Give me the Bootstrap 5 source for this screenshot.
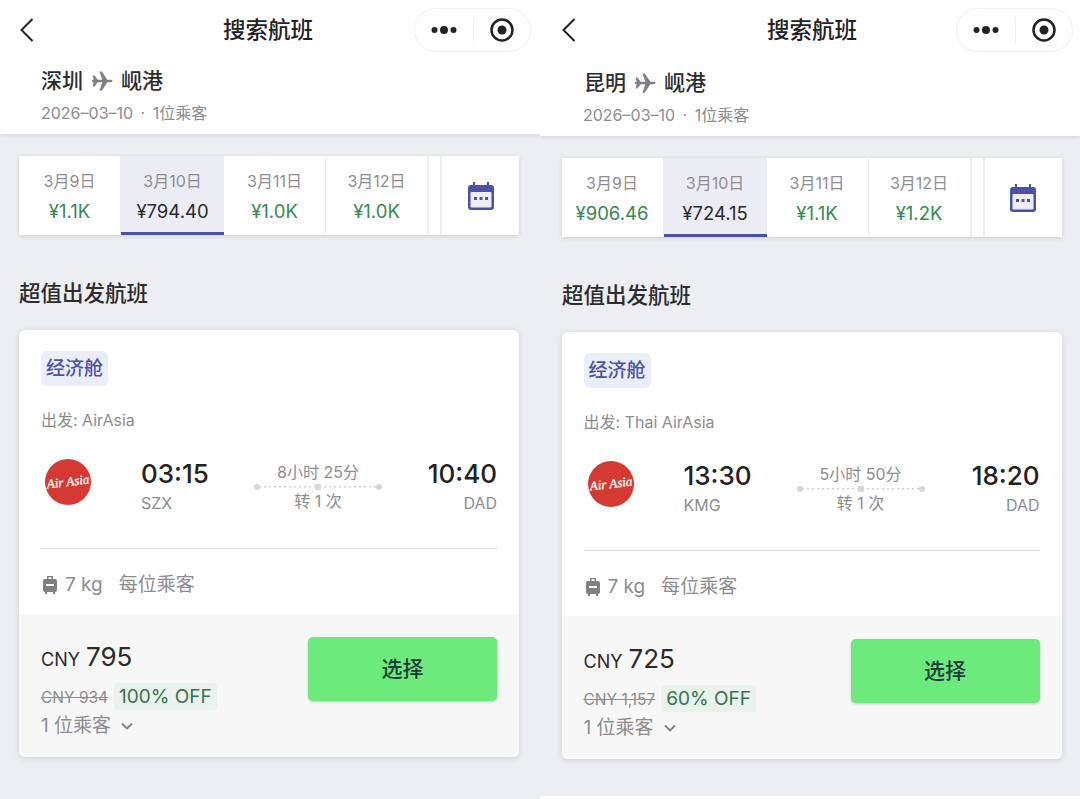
<!doctype html>
<html lang="zh"><head><meta charset="utf-8"><title>搜索航班</title>
<link href="https://cdn.jsdelivr.net/npm/bootstrap@5.3.0/dist/css/bootstrap.min.css" rel="stylesheet">
<style>
html,body{height:799px;overflow:hidden}
body{font-family:Inter,"Noto Sans CJK SC",sans-serif;color:#222;background:#eceef2}
.shot{width:1080px;height:799px}
.pane{width:540px;height:799px;background:#eceef2;overflow:hidden}
.head-top{background:#fff;box-shadow:0 1px 5px rgba(0,0,0,.12);height:134px}
.pane2 .head-top{height:136px}
.navline{height:60px;display:grid;grid-template-columns:1fr auto 1fr;align-items:center;padding:0 9px 0 19px}
.pane2 .navline{padding-left:21px;padding-right:7px}
.navtitle{font-size:22.500px;font-weight:500;margin-right:-2px;position:relative;left:-8px}
.pane2 .navtitle{left:-6px}
.capsule{width:117px;height:44px;border:1px solid #f0f0f2;border-radius:22px;justify-self:end}
.capsule i{display:block;width:1px;height:26px;background:#f1f1f3}
.route{font-size:21px;font-weight:500;line-height:30px;padding-left:41px;color:#2c2c2e;margin-top:6px}
.pane2 .route{margin-top:8px;padding-left:44px}
.subl{font-size:16px;line-height:22px;color:#8c8c90;padding-left:41px;margin-top:6px;word-spacing:3px}
.pane2 .subl{padding-left:43px}
.strip{margin:22px 21px 0 19px;height:79px;background:#eceef2;box-shadow:0 1px 4px rgba(0,0,0,.14)}
.pane2 .strip{margin-left:21.500px;margin-right:18.500px}
.dtab{background:#fff;text-align:center;margin-right:1px;width:101px;flex:none;padding-top:14px}
.dtab b{display:block;font-weight:400;font-size:16px;line-height:22px;color:#8e8e92}
.dtab span{display:block;font-size:18.500px;line-height:30px;color:#36894f;margin-top:4px}
.dtab.on{background:#ecedf4;border-bottom:3px solid #4c51a8;width:103px;margin-right:0}
.dtab.on span{color:#2a2a2c}
.dtab.lastd{margin-right:2px}
.sliver{background:#fff;width:11px;flex:none;margin-right:2px}
.calcell{background:#fff;flex:1}
.sect{font-size:21.500px;font-weight:500;line-height:30px;margin:43px 0 0 19px;color:#2c2c2e}
.pane2 .sect{margin-left:22px}
.fcard{margin:22px 21px 0 19px;height:427px;background:#fff;border-radius:6px;box-shadow:0 1px 6px rgba(0,0,0,.13);overflow:hidden}
.pane2 .fcard{margin-left:21.500px;margin-right:18.500px}
.cardtop{height:284px;padding:21px 22px 0}
.cabin{display:inline-block;height:35px;line-height:35px;width:67px;text-align:center;border-radius:6px;background:#eaeef9;color:#4c51a8;font-size:19px;font-weight:500}
.dep{font-size:16px;line-height:22px;color:#8c8c90;margin-top:23px}
.legs{height:70px;margin-top:20px}
.logo{width:46px;flex:none;margin-left:4px;margin-top:-8px}
.tm{font-size:26px;line-height:32px;font-weight:500;color:#222}
.ap{font-size:16px;line-height:22px;color:#8c8c90;margin-top:2px}
.ldep{margin-left:50px;width:114px}
.lmid{width:128px;text-align:center;color:#8c8c90;font-size:16px;line-height:22px;padding-top:1px;margin-left:-1px}
.dots{height:6px;margin:1px 0 0;position:relative;background:repeating-linear-gradient(90deg,#cfd0da 0 2px,transparent 2px 5px) 0 2px/100% 1.5px no-repeat}
.dots u{position:absolute;top:0;width:6px;height:6px;border-radius:50%;background:#d5d6de}
.dots u:nth-child(1){left:0}.dots u:nth-child(2){left:61px;border-radius:1px}.dots u:nth-child(3){right:0}
.lend{margin-left:auto;text-align:right}
.rule{height:1px;background:#dcdde0;margin-top:27px}
.bag{margin-top:23px;font-size:19px;line-height:26px;color:#8c8c90;padding-left:2px}
.bag span+span{margin-left:16px}
.foot{height:143px;background:#f7f7f7;padding:23px 22px 0}
.cny{font-size:18px;line-height:28px;color:#2a2a2c;margin-top:6px}
.cny em{font-style:normal;font-size:26px;margin-left:1px}
.oldp{font-size:15.500px;color:#8c8c90;text-decoration:line-through}
.off{display:inline-block;background:#e9f2ec;color:#36744c;border-radius:4px;font-size:19px;line-height:27px;padding:0 5px;margin-left:6px}
.oldrow{margin-top:9px;line-height:27px}
.pax{font-size:19px;line-height:26px;color:#8c8c90;margin-top:2px}
.chev{margin-left:10px}
.pickbtn{width:189px;height:64px;background:#6cea7c;border:0;border-radius:5px;color:#1f3a3a;font-size:21px;font-weight:500;box-shadow:0 1px 3px rgba(0,0,0,.2);--bs-btn-hover-bg:#6cea7c;--bs-btn-bg:#6cea7c}
.pane2 .tailbar{height:6px;background:#fff;margin-top:37px}
</style></head>
<body>
<div class="shot d-flex">

<div class="pane">
<div class="head-top">
<div class="navline">
<svg width="16" height="26" viewBox="0 0 16 26"><path d="M13.5 2 2.5 13l11 11" fill="none" stroke="#222" stroke-width="2"/></svg>
<div class="navtitle">搜索航班</div>
<div class="capsule d-flex align-items-center justify-content-between ps-3 pe-3">
<svg width="26" height="10" viewBox="0 0 26 10"><circle cx="3.500" cy="5" r="3" fill="#222"/><circle cx="13" cy="5" r="4" fill="#222"/><circle cx="22.500" cy="5" r="3" fill="#222"/></svg>
<i></i>
<svg width="24" height="24" viewBox="0 0 24 24"><circle cx="12" cy="12" r="10.500" fill="none" stroke="#222" stroke-width="2.500"/><circle cx="12" cy="12" r="4.500" fill="#222"/></svg>
</div>
</div>
<div class="route d-flex align-items-center"><span>深圳</span><svg class="mx-2" width="22" height="22" viewBox="0 0 24 24"><path d="M1 12c0-.8.7-1.300 1.500-1.300h.5L1.800 6h2l3.500 4.700h5L9.300 1.500h2.500l6 9.200h3.200c1.400 0 2.500.6 2.500 1.300s-1.100 1.300-2.500 1.300h-3.200l-6 9.200H9.300l3-9.200h-5L3.800 18h-2L3 13.300h-.5C1.700 13.300 1 12.800 1 12z" fill="#7f7f84"/></svg><span>岘港</span></div>
<div class="subl">2026–03–10 · 1位乘客</div>
</div>
<div class="strip d-flex">
<div class="dtab"><b>3月9日</b><span>¥1.1K</span></div>
<div class="dtab on"><b>3月10日</b><span>¥794.40</span></div>
<div class="dtab"><b>3月11日</b><span>¥1.0K</span></div>
<div class="dtab lastd"><b>3月12日</b><span>¥1.0K</span></div>
<div class="sliver"></div>
<div class="calcell d-flex align-items-center justify-content-center">
<svg width="26" height="28" viewBox="0 0 26 28"><path d="M5 0h2v3h12V0h2v3h2a3 3 0 0 1 3 3v19a3 3 0 0 1-3 3H3a3 3 0 0 1-3-3V6a3 3 0 0 1 3-3h2z" fill="#4c51a8"/><rect x="2.500" y="10" width="21" height="15.500" rx="1" fill="#ecedf6"/><rect x="6" y="15" width="3" height="3" fill="#4c51a8"/><rect x="11.500" y="15" width="3" height="3" fill="#4c51a8"/><rect x="17" y="15" width="3" height="3" fill="#4c51a8"/></svg>
</div>
</div>
<div class="sect">超值出发航班</div>
<div class="fcard">
<div class="cardtop">
<span class="cabin">经济舱</span>
<div class="dep">出发: AirAsia</div>
<div class="legs d-flex align-items-center">
<div class="logo"><svg width="46" height="46" viewBox="0 0 46 46"><circle cx="23" cy="23" r="23" fill="#d43a31"/><text x="23" y="27" text-anchor="middle" font-family="Liberation Serif,serif" font-style="italic" font-size="13" fill="#fff" stroke="#fff" stroke-width=".3" transform="rotate(-7 23 23)">Air Asia</text></svg></div>
<div class="ldep"><div class="tm">03:15</div><div class="ap">SZX</div></div>
<div class="lmid"><div>8小时 25分</div><div class="dots"><u></u><u></u><u></u></div><div>转 1 次</div></div>
<div class="lend"><div class="tm">10:40</div><div class="ap">DAD</div></div>
</div>
<div class="rule"></div>
<div class="bag d-flex align-items-center"><svg class="me-2" width="14" height="18" viewBox="0 0 14 18"><path d="M4 0h6v3h2a2 2 0 0 1 2 2v9a2 2 0 0 1-2 2v2h-2v-2H4v2H2v-2a2 2 0 0 1-2-2V5a2 2 0 0 1 2-2h2zm1.500 1.300V3h3V1.300z" fill="#7f7f84"/><rect x="3" y="8" width="8" height="2" fill="#fff"/></svg><span>7 kg</span><span>每位乘客</span></div>
</div>
<div class="foot d-flex justify-content-between align-items-start">
<div>
<div class="cny">CNY <em>795</em></div>
<div class="oldrow"><span class="oldp">CNY 934</span><span class="off">100% OFF</span></div>
<div class="pax d-flex align-items-center">1 位乘客<svg class="chev" width="12" height="8" viewBox="0 0 12 8"><path d="M1 1.500 6 6.500l5-5" fill="none" stroke="#7f7f84" stroke-width="1.800"/></svg></div>
</div>
<button class="btn pickbtn" type="button">选择</button>
</div>
</div>
</div>

<div class="pane pane2">
<div class="head-top">
<div class="navline">
<svg width="16" height="26" viewBox="0 0 16 26"><path d="M13.5 2 2.5 13l11 11" fill="none" stroke="#222" stroke-width="2"/></svg>
<div class="navtitle">搜索航班</div>
<div class="capsule d-flex align-items-center justify-content-between ps-3 pe-3">
<svg width="26" height="10" viewBox="0 0 26 10"><circle cx="3.500" cy="5" r="3" fill="#222"/><circle cx="13" cy="5" r="4" fill="#222"/><circle cx="22.500" cy="5" r="3" fill="#222"/></svg>
<i></i>
<svg width="24" height="24" viewBox="0 0 24 24"><circle cx="12" cy="12" r="10.500" fill="none" stroke="#222" stroke-width="2.500"/><circle cx="12" cy="12" r="4.500" fill="#222"/></svg>
</div>
</div>
<div class="route d-flex align-items-center"><span>昆明</span><svg class="mx-2" width="22" height="22" viewBox="0 0 24 24"><path d="M1 12c0-.8.7-1.300 1.500-1.300h.5L1.800 6h2l3.500 4.700h5L9.300 1.500h2.500l6 9.200h3.200c1.400 0 2.500.6 2.500 1.300s-1.100 1.300-2.500 1.300h-3.200l-6 9.200H9.300l3-9.200h-5L3.800 18h-2L3 13.300h-.5C1.700 13.300 1 12.800 1 12z" fill="#7f7f84"/></svg><span>岘港</span></div>
<div class="subl">2026–03–10 · 1位乘客</div>
</div>
<div class="strip d-flex">
<div class="dtab"><b>3月9日</b><span>¥906.46</span></div>
<div class="dtab on"><b>3月10日</b><span>¥724.15</span></div>
<div class="dtab"><b>3月11日</b><span>¥1.1K</span></div>
<div class="dtab lastd"><b>3月12日</b><span>¥1.2K</span></div>
<div class="sliver"></div>
<div class="calcell d-flex align-items-center justify-content-center">
<svg width="26" height="28" viewBox="0 0 26 28"><path d="M5 0h2v3h12V0h2v3h2a3 3 0 0 1 3 3v19a3 3 0 0 1-3 3H3a3 3 0 0 1-3-3V6a3 3 0 0 1 3-3h2z" fill="#4c51a8"/><rect x="2.500" y="10" width="21" height="15.500" rx="1" fill="#ecedf6"/><rect x="6" y="15" width="3" height="3" fill="#4c51a8"/><rect x="11.500" y="15" width="3" height="3" fill="#4c51a8"/><rect x="17" y="15" width="3" height="3" fill="#4c51a8"/></svg>
</div>
</div>
<div class="sect">超值出发航班</div>
<div class="fcard">
<div class="cardtop">
<span class="cabin">经济舱</span>
<div class="dep">出发: Thai AirAsia</div>
<div class="legs d-flex align-items-center">
<div class="logo"><svg width="46" height="46" viewBox="0 0 46 46"><circle cx="23" cy="23" r="23" fill="#d43a31"/><text x="23" y="27" text-anchor="middle" font-family="Liberation Serif,serif" font-style="italic" font-size="13" fill="#fff" stroke="#fff" stroke-width=".3" transform="rotate(-7 23 23)">Air Asia</text></svg></div>
<div class="ldep"><div class="tm">13:30</div><div class="ap">KMG</div></div>
<div class="lmid"><div>5小时 50分</div><div class="dots"><u></u><u></u><u></u></div><div>转 1 次</div></div>
<div class="lend"><div class="tm">18:20</div><div class="ap">DAD</div></div>
</div>
<div class="rule"></div>
<div class="bag d-flex align-items-center"><svg class="me-2" width="14" height="18" viewBox="0 0 14 18"><path d="M4 0h6v3h2a2 2 0 0 1 2 2v9a2 2 0 0 1-2 2v2h-2v-2H4v2H2v-2a2 2 0 0 1-2-2V5a2 2 0 0 1 2-2h2zm1.500 1.300V3h3V1.300z" fill="#7f7f84"/><rect x="3" y="8" width="8" height="2" fill="#fff"/></svg><span>7 kg</span><span>每位乘客</span></div>
</div>
<div class="foot d-flex justify-content-between align-items-start">
<div>
<div class="cny">CNY <em>725</em></div>
<div class="oldrow"><span class="oldp">CNY 1,157</span><span class="off">60% OFF</span></div>
<div class="pax d-flex align-items-center">1 位乘客<svg class="chev" width="12" height="8" viewBox="0 0 12 8"><path d="M1 1.500 6 6.500l5-5" fill="none" stroke="#7f7f84" stroke-width="1.800"/></svg></div>
</div>
<button class="btn pickbtn" type="button">选择</button>
</div>
</div>
<div class="tailbar"></div>
</div>

</div>
<script src="https://cdn.jsdelivr.net/npm/bootstrap@5.3.0/dist/js/bootstrap.bundle.min.js"></script>
</body></html>
